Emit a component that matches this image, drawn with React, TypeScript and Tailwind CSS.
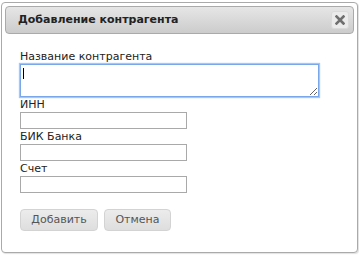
import React from 'react';

const font = { fontFamily: '"DejaVu Sans", Verdana, sans-serif' };

const Field: React.FC<{ label: string }> = ({ label }) => (
  <>
    <label className="block text-[11px] leading-[15px] text-[#222]">{label}</label>
    <input
      type="text"
      className="block w-[167px] h-[17px] border border-[#a9a9a9] bg-white outline-none"
    />
  </>
);

const App: React.FC = () => {
  return (
    <div className="w-[359px] h-[255px] bg-white pt-[2px] pl-[1px]" style={font}>
      <div className="w-[357px] h-[251px] rounded-[4px] border border-[#aaaaaa] bg-white p-[3px] shadow-[1px_1px_1px_rgba(0,0,0,0.12)]">
        {/* title bar */}
        <div className="h-[28px] flex items-center justify-between rounded-[4px] border border-[#aaaaaa] bg-gradient-to-b from-[#e6e6e6] to-[#cccccc] pl-[12px] pr-[4px]">
          <span className="text-[11px] font-bold text-[#222]">Добавление контрагента</span>
          <button className="w-[18px] h-[18px] flex items-center justify-center rounded-[3px] border border-[#dadada] bg-[#ebebeb]">
            <svg width="10" height="10" viewBox="0 0 10 10">
              <path d="M1.5 1.5 L8.5 8.5 M8.5 1.5 L1.5 8.5" stroke="#6f6f6f" strokeWidth="2.6" strokeLinecap="square" />
            </svg>
          </button>
        </div>

        {/* form */}
        <div className="pt-[15px] pl-[15px]">
          <label className="block text-[11px] leading-[15px] text-[#222]">Название контрагента</label>
          <div className="relative w-[299px]">
            <textarea
              className="block w-[299px] h-[33px] border border-[#7aa6ea] shadow-[0_0_1px_1px_#a8c6f5] outline-none resize"
            />
            <div className="absolute left-[3px] top-[4px] w-[1px] h-[11px] bg-black" />
          </div>
          <Field label="ИНН" />
          <Field label="БИК Банка" />
          <Field label="Счет" />

          <div className="flex gap-[6px] mt-[16px]">
            <button className="w-[78px] h-[22px] rounded-[4px] border border-[#d3d3d3] bg-gradient-to-b from-[#ececec] to-[#dedede] text-[11px] text-[#555]">
              Добавить
            </button>
            <button className="w-[67px] h-[22px] rounded-[4px] border border-[#d3d3d3] bg-gradient-to-b from-[#ececec] to-[#dedede] text-[11px] text-[#555]">
              Отмена
            </button>
          </div>
        </div>
      </div>
    </div>
  );
};

export default App;
